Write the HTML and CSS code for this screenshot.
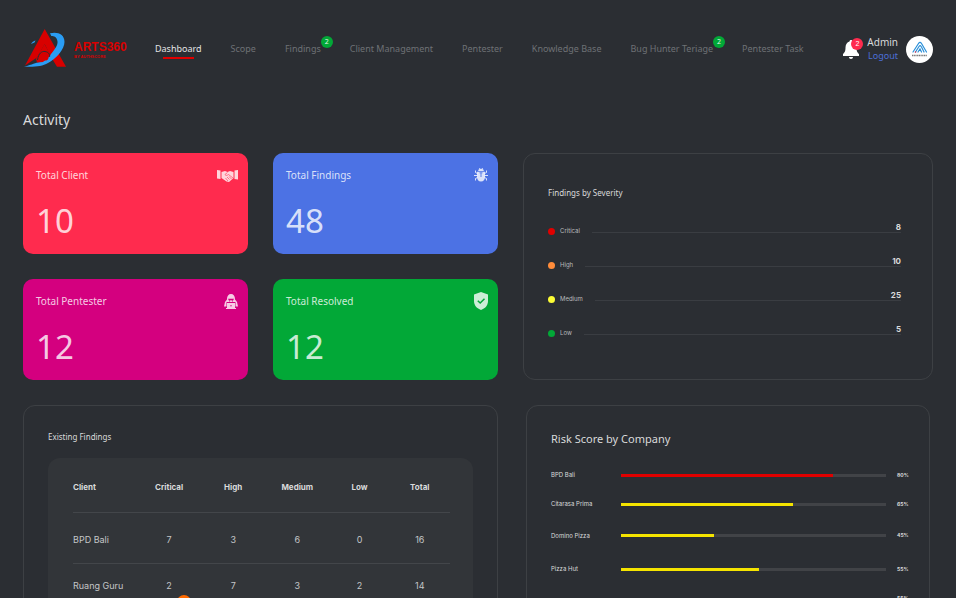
FILE: index.html
```
<!DOCTYPE html>
<html lang="en">
<head>
<meta charset="utf-8">
<meta name="viewport" content="width=device-width, initial-scale=1">
<title>ARTS360 Dashboard</title>
<link rel="stylesheet" href="styles.css">
</head>
<body>
<div class="page">
  <header class="topbar">
    <a class="brand" href="#">
      <svg class="brand-mark" viewBox="0 0 44 40" aria-hidden="true">
        <path d="M8 15C9 13 10.500 12 12.500 11.500L11.500 13.500Z" fill="#2a9df4"/>
        <path d="M21.700 0L43 37.700H34L28 28L21.700 15L14 28.500L2 36.500Z" fill="#d80000"/>
        <path d="M27 4.300C35 2.500 41.500 5.500 41.500 13C41.500 20 33 30 25 34C19 37.500 13 38 1 37.700C10 35.500 12 33.500 17 33C22 32 25 29 28 25C32 20 35 16 34.500 12.500C34 8 31 7 28.300 7Z" fill="#2a9df4"/>
        <path d="M13 30L21.500 15L27.500 26L20 33L14 33.500Z" fill="#d80000"/>
        <path d="M14.500 31C15.500 24 19 22 22 22.500C26 23 27 26 26.500 28" fill="none" stroke="#2b2e33" stroke-width="1"/>
        <circle cx="21.700" cy="27.700" r="3.900" fill="#d80000"/>
      </svg>
      <span class="brand-text"><span class="brand-name">ARTS360</span><span class="brand-by">BY AUTHSCORE</span></span>
    </a>
    <nav class="nav">
      <a class="nav-link active" href="#">Dashboard</a>
      <a class="nav-link" href="#">Scope</a>
      <a class="nav-link" href="#">Findings<span class="badge">2</span></a>
      <a class="nav-link" href="#">Client Management</a>
      <a class="nav-link" href="#">Pentester</a>
      <a class="nav-link" href="#">Knowledge Base</a>
      <a class="nav-link" href="#">Bug Hunter Teriage<span class="badge">2</span></a>
      <a class="nav-link" href="#">Pentester Task</a>
    </nav>
    <div class="account">
      <button class="bell" type="button" aria-label="Notifications">
        <svg viewBox="0 0 16 19" aria-hidden="true"><path d="M8 0C9 0 9.500.600 9.500 1.500C12 2.200 13.500 4.500 13.500 7.500C13.500 11.500 14.500 12.500 16 14V16H0V14C1.500 12.500 2.500 11.500 2.500 7.500C2.500 4.500 4 2.200 6.500 1.500C6.500.600 7 0 8 0ZM6 17H10C10 18.300 9.200 19 8 19S6 18.300 6 17Z" fill="#fff"/></svg>
        <span class="badge alert">2</span>
      </button>
      <div class="user"><span>Admin</span><a href="#">Logout</a></div>
      <svg class="avatar" viewBox="0 0 27 27" aria-hidden="true">
        <circle cx="13.500" cy="13.500" r="13.500" fill="#fff"/>
        <g fill="none" stroke="#2a8fd8" stroke-width="1.200" stroke-linecap="round">
          <path d="M7 16L12.500 7.500C13.500 6 14.500 6 15.500 7.500L20.500 16"/>
          <path d="M9.500 16L13 10.500C14 9 14.500 9.500 15.500 11L18 16"/>
          <path d="M12 16L14 13L15.500 16"/>
        </g>
        <circle cx="9.500" cy="16" r=".8" fill="#e8304a"/>
        <path d="M6 19.500H21" stroke="#777" stroke-width="1.400" stroke-dasharray="1.200 .5"/>
      </svg>
    </div>
  </header>

  <main class="content">
    <h1>Activity</h1>
    <div class="overview">
      <section class="stat red">
        <h2>Total Client</h2>
        <svg class="stat-icon" width="22" height="14" viewBox="0 0 22 14" aria-hidden="true">
          <path d="M1 2L4.500 2.500V11L1 10.500ZM22 2L18.500 2.500V11L22 11.500Z" fill="currentColor"/>
          <path d="M5.500 4L9 3L11.500 4L14 3L17.500 4V10L13 14L10.500 13.500L5.500 10Z" fill="currentColor"/>
          <path d="M11.500 4.500L9 6.500C9.500 8 11 7.500 12.500 6.500L17 10M11 9L13.500 11.500M9.500 10L12 13M13 8.500L15.500 11" fill="none" stroke="#ff2b4e" stroke-width=".6"/>
        </svg>
        <p>10</p>
      </section>
      <section class="stat blue">
        <h2>Total Findings</h2>
        <svg class="stat-icon" width="14" height="14" viewBox="0 0 14 14" aria-hidden="true">
          <path d="M4.200 3C4.200 1.800 5 1 5.500 1L5 0H6L6.500 1H7.500L8 0H9L8.500 1C9 1 9.800 1.800 9.800 3ZM3 3.800H11V9C11 11.500 9.500 13.500 7 13.500S3 11.500 3 9Z" fill="currentColor"/>
          <path d="M3.500 5.500L1.500 4.500V2.500M3.500 7.500H0M3.500 9.500L1.500 10.500V12.500M10.500 5.500L12.500 4.500V2.500M10.500 7.500H14M10.500 9.500L12.500 10.500V12.500" fill="none" stroke="currentColor"/>
          <path d="M7 5V9M5.500 4.800H8.500" stroke="#4c72e4" stroke-width=".9"/>
        </svg>
        <p>48</p>
      </section>
      <section class="stat magenta">
        <h2>Total Pentester</h2>
        <svg class="stat-icon" width="14" height="15" viewBox="0 0 14 15" aria-hidden="true">
          <path d="M3 5C3 2 4.500 0 7 0S11 2 11 5C11 6 12 6.500 13 8L14 12.500H11.500V8H2.500V12.500H0L1 8C2 6.500 3 6 3 5ZM3 9H11V14H12V15H2V14H3Z" fill="currentColor"/>
          <path d="M4 4.800H10L9 6.800H8L7 6L6 6.800H5ZM5 7.300L7 8.500L9 7.300V8H5Z" fill="#d4007f"/>
          <circle cx="7" cy="11.800" r=".7" fill="#d4007f"/>
        </svg>
        <p>12</p>
      </section>
      <section class="stat green">
        <h2>Total Resolved</h2>
        <svg class="stat-icon" width="14" height="18" viewBox="0 0 14 18" aria-hidden="true">
          <path d="M7 0L14 2.500V9C14 13.500 11 16.500 7 18C3 16.500 0 13.500 0 9V2.500Z" fill="currentColor"/>
          <path d="M3.800 8.700L6.200 11L10.500 6.700" fill="none" stroke="#02a837" stroke-width="1.500"/>
        </svg>
        <p>12</p>
      </section>

      <section class="card severity">
        <h2>Findings by Severity</h2>
        <ul>
          <li><i class="dot critical"></i><span class="name">Critical</span><b>8</b></li>
          <li><i class="dot high"></i><span class="name">High</span><b>10</b></li>
          <li><i class="dot medium"></i><span class="name">Medium</span><b>25</b></li>
          <li><i class="dot low"></i><span class="name">Low</span><b>5</b></li>
        </ul>
      </section>

      <section class="card existing">
        <h2>Existing Findings</h2>
        <div class="panel">
          <table>
            <colgroup><col class="c-client"><col class="c-critical"><col class="c-high"><col class="c-medium"><col class="c-low"><col class="c-total"></colgroup>
            <thead>
              <tr><th>Client</th><th>Critical</th><th>High</th><th>Medium</th><th>Low</th><th>Total</th></tr>
            </thead>
            <tbody>
              <tr><td>BPD Bali</td><td>7</td><td>3</td><td>6</td><td>0</td><td>16</td></tr>
              <tr><td>Ruang Guru</td><td>2</td><td>7</td><td>3</td><td>2</td><td>14</td></tr>
            </tbody>
          </table>
        </div>
      </section>

      <section class="card risk">
        <h2>Risk Score by Company</h2>
        <ul>
          <li><span>BPD Bali</span><div class="track"><div class="fill over" style="width:80%"></div></div><b>80%</b></li>
          <li><span>Citarasa Prima</span><div class="track"><div class="fill" style="width:65%"></div></div><b>65%</b></li>
          <li><span>Domino Pizza</span><div class="track"><div class="fill" style="width:35%"></div></div><b>45%</b></li>
          <li><span>Pizza Hut</span><div class="track"><div class="fill" style="width:52%"></div></div><b>55%</b></li>
          <li><b>55%</b></li>
        </ul>
      </section>
    </div>
  </main>
  <span class="marker"></span>
</div>
</body>
</html>
```
FILE: styles.css
```
* { box-sizing: border-box; }

body {
  margin: 0;
  background: #2b2e33;
  color: #d9dadb;
  font-family: "Noto Sans", "Open Sans", sans-serif;
  font-size: 10px;
}

h1, h2, p, ul { margin: 0; padding: 0; font-weight: 400; }
ul { list-style: none; }
a { color: inherit; text-decoration: none; }

.page {
  position: relative;
  height: 100vh;
  overflow: hidden;
}

/* Header */
.topbar {
  display: flex;
  align-items: center;
  height: 98px;
  padding: 0 23px;
}

.brand {
  display: flex;
  align-items: center;
  gap: 7px;
  width: 132px;
  color: #d80000;
}
.brand-mark { width: 44px; height: 40px; }
.brand-text { display: flex; flex-direction: column; }
.brand-name {
  font: bold 12px/14px "Liberation Sans Narrow", "Liberation Sans", sans-serif;
}
.brand-by {
  font: bold 4px/5px "Liberation Sans Narrow", "Liberation Sans", sans-serif;
}

.nav {
  display: flex;
  flex: 1;
  gap: 29px;
  white-space: nowrap;
}
.nav-link {
  position: relative;
  font-size: 9px;
  line-height: 20px;
  color: #6e7175;
}
.nav-link.active { color: #e4e4e5; }
.nav-link.active::after {
  content: "";
  position: absolute;
  left: 8px;
  right: 8px;
  bottom: 0;
  height: 2px;
  background: #e00000;
}

.badge {
  position: absolute;
  top: -3px;
  right: -12px;
  width: 12px;
  height: 12px;
  border-radius: 50%;
  background: #02a837;
  color: #e4f4e8;
  font-size: 7px;
  line-height: 12px;
  text-align: center;
}

.account { display: flex; align-items: center; gap: 8px; }
.bell {
  position: relative;
  width: 16px;
  padding: 0;
  border: 0;
  background: none;
}
.bell svg { display: block; width: 16px; height: 19px; }
.badge.alert { top: -2px; right: -4px; background: #ff2b4e; color: #fff; }
.user {
  display: flex;
  flex-direction: column;
  line-height: 13px;
  text-align: right;
}
.user a { font-size: 9px; color: #4c6fd8; }
.avatar { width: 27px; height: 27px; }

/* Overview grid */
.content { padding: 10px 23px 0; }
h1 { font-size: 14px; line-height: 24px; }

.overview {
  display: grid;
  grid-template-columns: 225fr 225fr 410fr;
  grid-template-rows: 101px 101px auto;
  gap: 25px;
  margin-top: 21px;
}

.stat {
  display: grid;
  grid-template-columns: 1fr auto;
  align-content: start;
  padding: 12px 10px 0 13px;
  border-radius: 10px;
  color: rgba(255, 255, 255, .8);
}
.stat h2 { font-size: 10px; line-height: 20px; }
.stat p { grid-column: 1 / -1; font-size: 33px; line-height: 50px; margin-top: 11px; }
.stat-icon { align-self: center; }
.red { background: #ff2b4e; }
.blue { background: #4c72e4; }
.magenta { background: #d4007f; }
.green { background: #02a837; }

.card {
  border: 1px solid #3d4044;
  border-radius: 12px;
}
.card h2 { font-size: 8px; line-height: 12px; }

.severity {
  grid-column: 3;
  grid-row: 1 / 3;
  padding: 33px 31px 0 24px;
}
.severity ul { margin-top: 15px; }
.severity li { display: flex; align-items: center; height: 34px; }
.dot { width: 7px; height: 7px; border-radius: 50%; }
.critical { background: #e00000; }
.high { background: #ff8c3a; }
.medium { background: #fcfc35; }
.low { background: #02a837; }
.name {
  margin: 0 12px 0 5px;
  font: 6px/8px Inter, sans-serif;
  color: #b9bbbd;
}
.severity b {
  flex: 1;
  border-bottom: 1px solid #3a3d42;
  margin-bottom: 6px;
  font: bold 8px/9px Inter, sans-serif;
  text-align: right;
}

.existing {
  grid-column: 1 / 3;
  padding: 25px 24px 24px;
}
.panel {
  margin-top: 15px;
  padding: 4px 23px 0 25px;
  border-radius: 12px;
  background: #323539;
}
table {
  width: 100%;
  table-layout: fixed;
  border-collapse: collapse;
  font: 9px/12px Inter, sans-serif;
}
.c-client { width: 17%; }
.c-critical { width: 17%; }
.c-high { width: 17%; }
.c-medium { width: 17%; }
.c-low { width: 16%; }
.c-total { width: 16%; }
th, td {
  height: 50px;
  padding: 0;
  border-bottom: 1px solid #43464a;
  text-align: center;
}
th { font-size: 8px; }
td { height: 51px; padding-top: 4px; color: #c4c6c8; }
tr:last-child td { height: 46px; padding-top: 0; }
th:first-child, td:first-child { text-align: left; }

.risk {
  margin: 0 3px;
  padding: 24px 21px 24px 24px;
}
.risk h2 { font-size: 11px; line-height: 18px; }
.risk ul {
  display: grid;
  grid-template-rows: 28px 30px 33px 34px 24px;
  margin-top: 13px;
}
.risk li {
  display: grid;
  grid-template-columns: 70px 1fr 11px;
  align-items: center;
  font: 6px/8px Inter, sans-serif;
}
.risk b {
  grid-column: 3;
  padding-bottom: 1px;
  font: bold 5px/8px Inter, sans-serif;
}
.track { height: 3px; margin-right: 11px; background: #414347; }
.fill { height: 3px; background: #f5e400; }
.fill.over { background: #e00000; }

/* Floating marker at the lower edge of the viewport */
.marker {
  position: absolute;
  left: 177px;
  bottom: -11px;
  width: 14px;
  height: 14px;
  border-radius: 50%;
  background: #ff6a00;
}
```
